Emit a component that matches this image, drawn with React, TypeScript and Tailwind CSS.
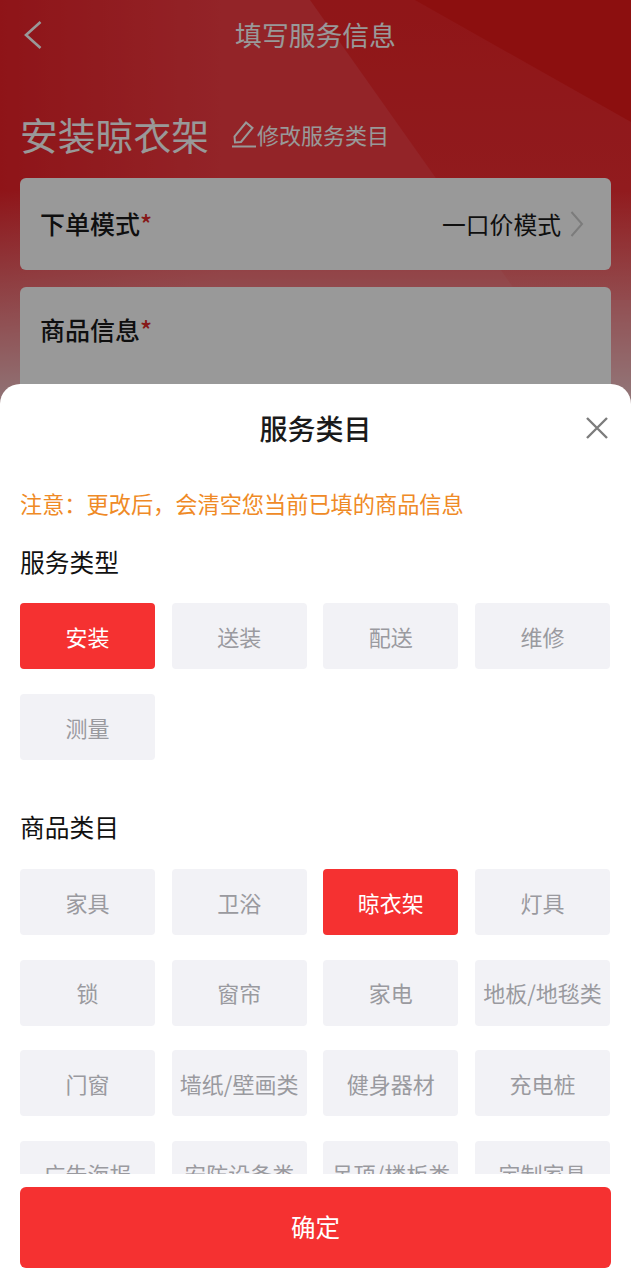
const serviceTypes = ["安装", "送装", "配送", "维修", "测量"];
const goodsTypes = [
  "家具", "卫浴", "晾衣架", "灯具",
  "锁", "窗帘", "家电", "地板/地毯类",
  "门窗", "墙纸/壁画类", "健身器材", "充电桩",
  "广告海报", "安防设备类", "吊顶/楼板类", "定制家具",
];

const Chip = ({ label, active }: { label: string; active: boolean }) => (
  <div
    className={
      active
        ? "h-[66px] flex items-center justify-center rounded-[4px] bg-[#f53131] text-white text-[22px] whitespace-nowrap"
        : "h-[66px] flex items-center justify-center rounded-[4px] bg-[#f2f2f6] text-[#9a9a9f] text-[22px] whitespace-nowrap"
    }
  >
    {label}
  </div>
);

const Background = () => (
  <svg className="absolute inset-0 w-full h-full" viewBox="0 0 631 1280" preserveAspectRatio="none">
    <defs>
      <linearGradient id="fade" x1="0" y1="0" x2="0" y2="1">
        <stop offset="0" stopColor="#f2f2f5" stopOpacity="0" />
        <stop offset="1" stopColor="#f2f2f5" stopOpacity="1" />
      </linearGradient>
      <linearGradient id="glow" x1="0" y1="0" x2="1" y2="0">
        <stop offset="0" stopColor="#ee2229" />
        <stop offset="0.35" stopColor="#f53c43" />
        <stop offset="1" stopColor="#f53c43" />
      </linearGradient>
      <linearGradient id="mid" x1="0" y1="0" x2="0" y2="1">
        <stop offset="0" stopColor="#ef2528" />
        <stop offset="1" stopColor="#f43238" />
      </linearGradient>
    </defs>
    <rect width="631" height="480" fill="url(#glow)" />
    <polygon points="310,0 631,0 631,300 522,300" fill="url(#mid)" />
    <polygon points="415,0 631,0 631,122" fill="#ea1a1a" />
    <rect y="190" width="631" height="277" fill="url(#fade)" />
  </svg>
);

export default function App() {
  return (
    <div className="relative w-full h-[1280px] overflow-hidden bg-[#f2f2f5] font-['Noto_Sans_CJK_SC','Noto_Sans',sans-serif]">
      <Background />

      <div className="relative px-5">
        <div className="h-[70px] grid grid-cols-[1fr_auto_1fr] items-center">
          <svg className="ml-1 w-[18px] h-[28px]" viewBox="0 0 18 28" fill="none" stroke="#fff" strokeWidth="2.6">
            <path d="M16.5 1 L2 14 L16.5 27" />
          </svg>
          <div className="text-[26.8px] leading-none text-white">填写服务信息</div>
        </div>

        <div className="mt-[36px] h-[56px] flex items-center">
          <span className="text-[37.8px] leading-none text-white">安装晾衣架</span>
          <svg className="ml-[22px] w-[26px] h-[28px]" viewBox="0 0 26 28" fill="none" stroke="#fff" strokeWidth="2">
            <path d="M4 22.5 L3.5 16.5 L15 2.5 L21.5 8 L10 22 Z" />
            <path d="M1 26.5 H25" />
          </svg>
          <span className="text-[22px] leading-none text-white">修改服务类目</span>
        </div>

        <div className="mt-[16px] h-[92px] rounded-[6px] bg-white px-[20px] flex items-center justify-between">
          <div className="text-[25px] font-medium text-[#1a1a1a]">
            下单模式<span className="text-[#e02a2a]">*</span>
          </div>
          <div className="flex items-center">
            <span className="text-[23.8px] text-[#1a1a1a]">一口价模式</span>
            <svg className="ml-[9px] mr-[7px] w-[14px] h-[26px]" viewBox="0 0 14 26" fill="none" stroke="#cfcfcf" strokeWidth="2">
              <path d="M1.5 1 L12 13 L1.5 25" />
            </svg>
          </div>
        </div>

        <div className="mt-[17px] h-[200px] rounded-[6px] bg-white px-[20px] pt-[24px]">
          <div className="text-[25px] font-medium text-[#1a1a1a]">
            商品信息<span className="text-[#e02a2a]">*</span>
          </div>
        </div>
      </div>

      {/* 遮罩 */}
      <div className="absolute inset-0 bg-black/40"></div>

      {/* 底部弹层 */}
      <div className="absolute inset-x-0 bottom-0 h-[896px] rounded-t-[20px] bg-white flex flex-col">
        <div className="h-[88px] shrink-0 grid grid-cols-[1fr_auto_1fr] items-center px-[22px]">
          <div></div>
          <div className="text-[28px] font-medium text-[#1a1a1a]">服务类目</div>
          <svg className="justify-self-end w-[24px] h-[24px]" viewBox="0 0 24 24" fill="none" stroke="#7c7c7c" strokeWidth="2.4">
            <path d="M2 2 L22 22 M22 2 L2 22" />
          </svg>
        </div>

        <div className="flex-1 overflow-hidden pl-5 pr-[21px]">
          <div className="h-[32px] mt-[16px] flex items-center text-[22.2px] text-[#ef8a26] whitespace-nowrap">
            注意：更改后，会清空您当前已填的商品信息
          </div>
          <div className="h-[36px] mt-[24px] flex items-center text-[24.75px] text-[#111]">服务类型</div>
          <div className="mt-[23px] grid grid-cols-4 gap-x-[16.67px] gap-y-[25px]">
            {serviceTypes.map((t, i) => (
              <Chip key={t} label={t} active={i === 0} />
            ))}
          </div>
          <div className="h-[36px] mt-[49px] flex items-center text-[24.75px] text-[#111]">商品类目</div>
          <div className="mt-[24px] grid grid-cols-4 gap-x-[16.67px] gap-y-[24.67px]">
            {goodsTypes.map((t) => (
              <Chip key={t} label={t} active={t === "晾衣架"} />
            ))}
          </div>
        </div>

        <div className="shrink-0 px-5 pt-[13px] pb-[12px]">
          <div className="h-[81px] rounded-[6px] bg-[#f53131] flex items-center justify-center text-[24.5px] text-white">
            确定
          </div>
        </div>
      </div>
    </div>
  );
}
